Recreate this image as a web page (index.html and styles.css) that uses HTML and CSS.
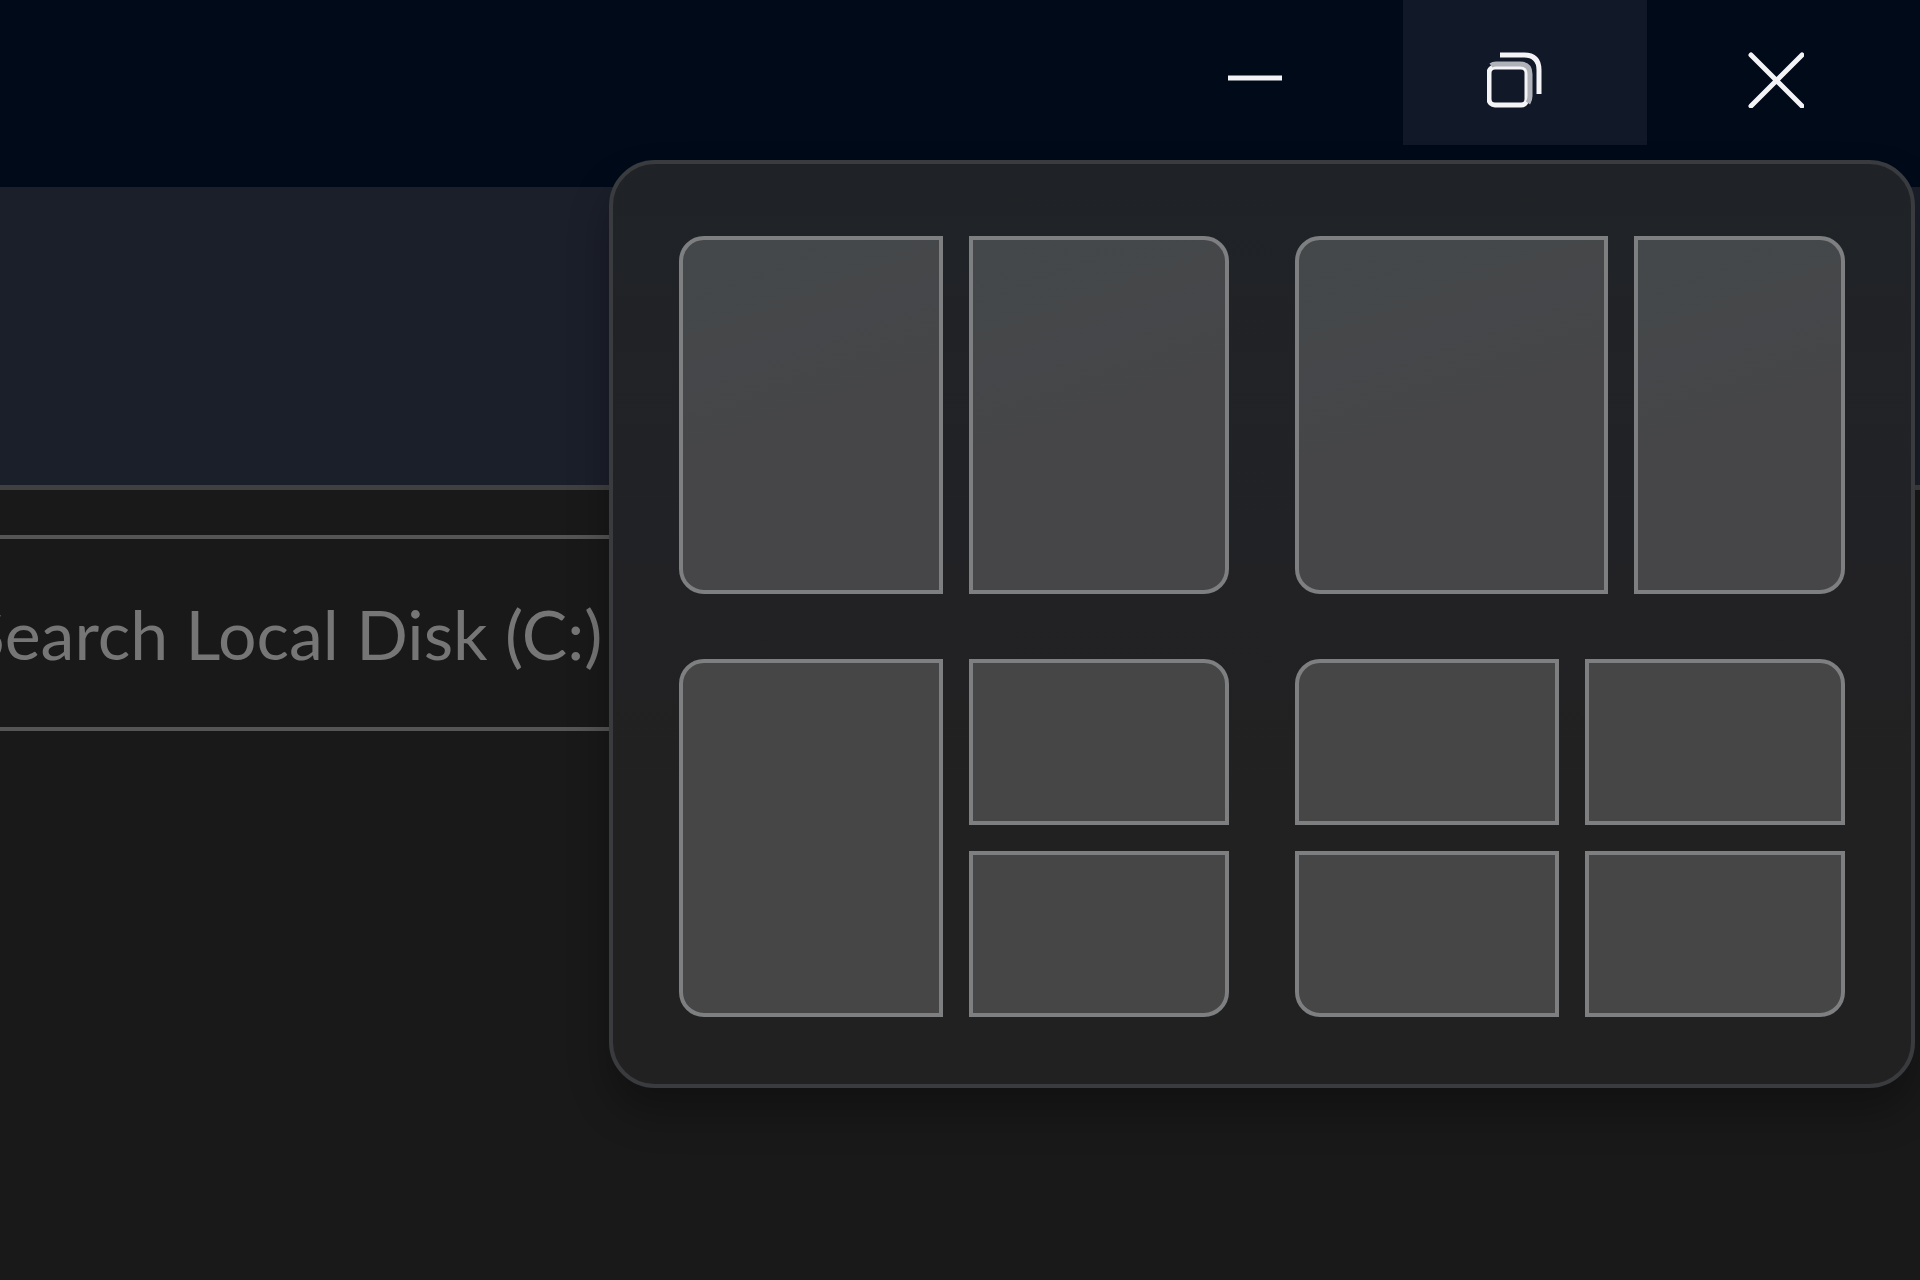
FILE: index.html
```html
<!DOCTYPE html>
<html lang="en">
<head>
<meta charset="utf-8">
<meta name="viewport" content="width=device-width, initial-scale=1">
<title>Local Disk (C:)</title>
<link rel="stylesheet" href="styles.css">
</head>
<body>
<div class="window">
  <header class="titlebar">
    <button class="caption" type="button" aria-label="Minimize">
      <svg class="glyph" viewBox="0 0 56 56"><path d="M2 26H56" stroke-width="5"/></svg>
    </button>
    <button class="caption caption-active" type="button" aria-label="Restore" aria-expanded="true">
      <svg class="glyph" viewBox="0 0 56 56">
        <rect x="2" y="15" width="38" height="38" rx="6" stroke-width="5"/>
        <path class="soft" d="M4 13.500Q6 12 9 12H33Q43 12 43 22V44Q43 48 41 51" stroke-width="5"/>
        <path d="M13 3H37Q52 3 52 18V42" stroke-width="5"/>
      </svg>
    </button>
    <button class="caption" type="button" aria-label="Close">
      <svg class="glyph" viewBox="0 0 56 56"><path d="M3 3L54 54M54 3L3 54" stroke-width="5" stroke-linecap="round"/></svg>
    </button>
  </header>

  <div class="commandbar"></div>

  <form class="addressbar" role="search">
    <input class="search" type="search" aria-label="Search" placeholder="Search Local Disk (C:)">
  </form>

  <main class="content"></main>

  <div class="snap" role="menu" aria-label="Snap layouts">
    <div class="layout halves" role="group" aria-label="Two halves">
      <button class="zone tl bl" type="button" aria-label="Left half"></button>
      <button class="zone tr br" type="button" aria-label="Right half"></button>
    </div>
    <div class="layout wide" role="group" aria-label="Wide and narrow">
      <button class="zone tl bl" type="button" aria-label="Wide left"></button>
      <button class="zone tr br" type="button" aria-label="Narrow right"></button>
    </div>
    <div class="layout halves split" role="group" aria-label="Half and two quarters">
      <button class="zone tall tl bl" type="button" aria-label="Left half"></button>
      <button class="zone tr" type="button" aria-label="Top right"></button>
      <button class="zone br" type="button" aria-label="Bottom right"></button>
    </div>
    <div class="layout halves split" role="group" aria-label="Four quarters">
      <button class="zone tl" type="button" aria-label="Top left"></button>
      <button class="zone tr" type="button" aria-label="Top right"></button>
      <button class="zone bl" type="button" aria-label="Bottom left"></button>
      <button class="zone br" type="button" aria-label="Bottom right"></button>
    </div>
  </div>
</div>
</body>
</html>
```

FILE: styles.css
```css
* {
  box-sizing: border-box;
}

body {
  margin: 0;
  background: #191919;
  font-family: Lato, "Open Sans", sans-serif;
}

.window {
  position: relative;
  display: flex;
  flex-direction: column;
  min-height: 100vh;
  overflow: hidden;
}

.titlebar {
  display: flex;
  justify-content: flex-end;
  align-items: flex-start;
  gap: 17px;
  height: 187px;
  padding-right: 12px;
  background: #000a19;
}

.caption {
  display: flex;
  justify-content: center;
  width: 244px;
  height: 145px;
  padding: 52px 20px 0 0;
  border: 0;
  background: transparent;
  color: #f4f4f6;
}

.caption-active {
  background: #111827;
}

.glyph {
  width: 56px;
  height: 56px;
  fill: none;
  stroke: currentColor;
}

.soft {
  stroke: #b0b2b9;
}

.commandbar {
  height: 298px;
  background: #1b1f2a;
}

.addressbar {
  padding-top: 45px;
  border-top: 5px solid #404040;
}

.search {
  display: block;
  width: calc(100% - 80px);
  height: 196px;
  margin: 0 0 0 -36px;
  padding: 0;
  border: 4px solid #555555;
  background: #191919;
  color: #ffffff;
  font: 68px/88px Lato, "Open Sans", sans-serif;
}

.search::placeholder {
  color: #767676;
  opacity: 1;
}

.content {
  flex: 1;
}

/* Flyout that hangs below the restore button */
.snap {
  position: absolute;
  top: 160px;
  right: 5px;
  display: grid;
  grid-template-columns: 1fr 1fr;
  gap: 65px 66px;
  width: min(1306px, 100% - 10px);
  padding: 72px 66px 67px;
  border: 4px solid #393b3e;
  border-radius: 46px;
  background: linear-gradient(#1f2327, #222225 45%, #212121 70%);
  box-shadow: 0 24px 40px rgba(0, 0, 0, 0.3);
}

.layout {
  display: grid;
  gap: 26px;
  height: 358px;
}

.halves {
  grid-template-columns: 264fr 260fr;
}

.wide {
  grid-template-columns: 313fr 211fr;
}

.split {
  grid-template-rows: 1fr 1fr;
}

.zone {
  min-width: 0;
  padding: 0;
  border: 4px solid #7e7f81;
  border-radius: 0;
  background: #464646;
}

.wide .zone,
.halves:first-child .zone {
  background: linear-gradient(160deg, #44484b, #464648 50%);
}

.tall {
  grid-row: span 2;
}

.tl {
  border-top-left-radius: 25px;
}

.tr {
  border-top-right-radius: 25px;
}

.bl {
  border-bottom-left-radius: 25px;
}

.br {
  border-bottom-right-radius: 25px;
}
```
